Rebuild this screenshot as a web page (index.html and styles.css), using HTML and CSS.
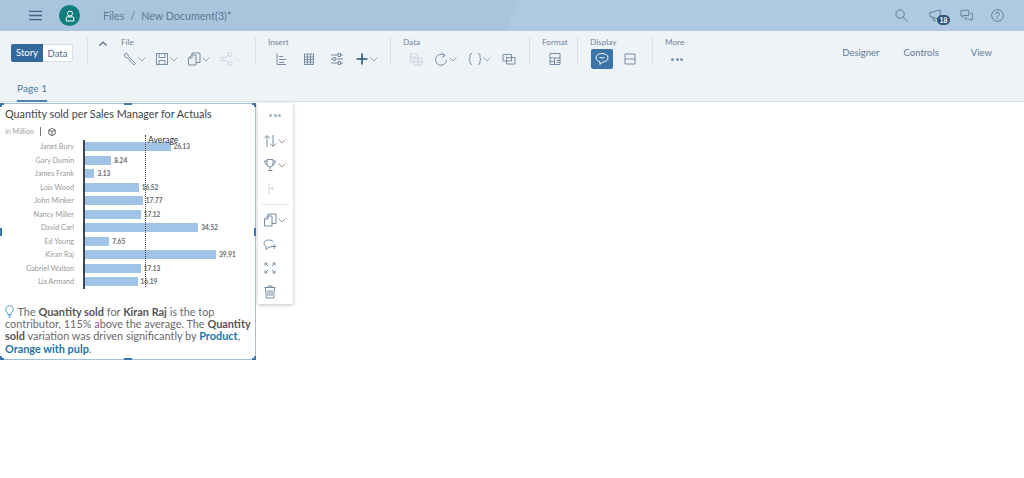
FILE: index.html
```html
<!DOCTYPE html>
<html lang="en">
<head>
  <meta charset="UTF-8" />
  <title>New Document(3)*</title>
  <link rel="stylesheet" href="styles.css">
</head>
<body>
  <header class="shell">
    <svg class="menu-icon" viewBox="0 0 14 12"><path d="M0 1.500h14M0 6h14M0 10.500h14"/></svg>
    <div class="avatar">
      <svg viewBox="0 0 12 14"><circle cx="6" cy="4" r="3"/><path d="M1.500 13V9.500q0-1.500 1.500-1.500h6q1.500 0 1.500 1.500V13z"/></svg>
    </div>
    <div class="crumbs">Files<span class="crumb-sep">/</span>New Document(3)*</div>
    <div class="shell-right">
      <svg class="shell-icon" viewBox="0 0 14 14"><circle cx="5.500" cy="5.500" r="4.500"/><path d="M9 9l4.500 4.500"/></svg>
      <div class="notice">
        <svg class="shell-icon" viewBox="0 0 14 14"><path d="M1 4l11-3v10L6 9.500 1 8zM4 9l1 3.500h2.500"/></svg>
        <span class="badge">18</span>
      </div>
      <svg class="shell-icon" viewBox="0 0 15 14"><path d="M1 1h9v6H4L2.500 9V7H1zM12 4.500h2.500v6.500H13v2l-2-2H6V8.500"/></svg>
      <svg class="shell-icon" viewBox="0 0 14 14"><circle cx="7" cy="7" r="6.300"/><path d="M5 5.500q0-2 2-2t2 2q0 1-1 1.500t-1 2M7 10v1"/></svg>
    </div>
  </header>

  <section class="toolbar">
    <div class="switch"><span class="switch-on">Story</span><span class="switch-off">Data</span></div>

    <div class="group group-file">
      <svg class="collapse" viewBox="0 0 8 5"><path d="M.5 4.500L4 1l3.500 3.500"/></svg>
      <div class="group-label">File</div>
      <div class="tools">
        <span class="tool"><svg class="icon" viewBox="0 0 14 14"><path d="M1 3l2-2 2 1.500 .5 2L12.500 11.500 11 13 4.500 6 2.500 5.500z"/></svg><svg class="chev" viewBox="0 0 8 5"><path d="M.5 .5L4 4l3.500-3.500"/></svg></span>
        <span class="tool"><svg class="icon" viewBox="0 0 14 14"><path d="M1.500 1.500h11v11h-11zM4 1.500v4h6v-4M4 12.500v-4h6v4"/></svg><svg class="chev" viewBox="0 0 8 5"><path d="M.5 .5L4 4l3.500-3.500"/></svg></span>
        <span class="tool"><svg class="icon" viewBox="0 0 14 14"><path d="M1.500 6L5 3h4v10H1.500zM5 3v3H1.500M5 3V1h8v9.500H9"/></svg><svg class="chev" viewBox="0 0 8 5"><path d="M.5 .5L4 4l3.500-3.500"/></svg></span>
        <span class="tool tool-off"><svg class="icon" viewBox="0 0 14 14"><circle cx="3" cy="7" r="2"/><circle cx="11" cy="2.500" r="2"/><circle cx="11" cy="11.500" r="2"/><path d="M5 6l4-2.500M5 8l4 2.500"/></svg><svg class="chev" viewBox="0 0 8 5"><path d="M.5 .5L4 4l3.500-3.500"/></svg></span>
      </div>
    </div>

    <div class="group group-insert">
      <div class="group-label">Insert</div>
      <div class="tools tools-insert">
        <span class="tool"><svg class="icon" viewBox="0 0 14 14"><path d="M3 1.500v11h9M5 4.500h4M5 7.500h7M5 10.500h5" /></svg></span>
        <span class="tool"><svg class="icon" viewBox="0 0 14 14"><path d="M2.500 2h9v10.500h-9zM2.500 5h9M2.500 7.500h9M2.500 10h9M5.500 2v10.500M8.500 2v10.500"/></svg></span>
        <span class="tool"><svg class="icon" viewBox="0 0 14 14"><path d="M1 3h12M1 7h12M1 11h12"/><path class="knob" d="M8 1.500h2.500v3H8zM3 5.500h2.500v3H3zM8 9.500h2.500v3H8z"/></svg></span>
        <span class="tool tool-plus"><svg class="icon icon-bold" viewBox="0 0 14 14"><path d="M7 1.500v11M1.500 7h11"/></svg><svg class="chev" viewBox="0 0 8 5"><path d="M.5 .5L4 4l3.500-3.500"/></svg></span>
      </div>
    </div>

    <div class="group group-data">
      <div class="group-label">Data</div>
      <div class="tools tools-data">
        <span class="tool tool-off"><svg class="icon" viewBox="0 0 14 14"><path d="M1.500 2h7v3M1.500 2v8h3M1.500 5h5M5 6h8v7H5zM5 9.500h8M9 6v7"/></svg></span>
        <span class="tool"><svg class="icon" viewBox="0 0 14 14"><path d="M10.500 3.500A5.500 5.500 0 1 0 12.500 8M8 .5l3 3-3 2"/></svg><svg class="chev" viewBox="0 0 8 5"><path d="M.5 .5L4 4l3.500-3.500"/></svg></span>
        <span class="tool"><svg class="icon" viewBox="0 0 14 14"><path d="M4 1.500Q2 1.500 2 3.500V5.500L.8 7 2 8.500v2q0 2 2 2M10 1.500q2 0 2 2v2L13.200 7 12 8.500v2q0 2-2 2"/></svg><svg class="chev" viewBox="0 0 8 5"><path d="M.5 .5L4 4l3.500-3.500"/></svg></span>
        <span class="tool"><svg class="icon" viewBox="0 0 14 14"><path d="M1 2.500h8.500v6.500H1zM4.500 5.500H13V12H4.500z"/></svg></span>
      </div>
    </div>

    <div class="group group-format">
      <div class="group-label">Format</div>
      <div class="tools tools-data">
        <span class="tool"><svg class="icon" viewBox="0 0 14 14"><path d="M2 1.500h10v11H2zM2 6h10M2 9.500h4.500M6.500 6v6.500M8.500 8.500H12M8.500 10.500H12"/></svg></span>
      </div>
    </div>

    <div class="group group-display">
      <div class="group-label">Display</div>
      <div class="tools tools-display">
        <span class="toggle-on"><svg class="icon" viewBox="0 0 14 14"><path d="M7 1.500c3.500 0 6 1.800 6 4.300s-2.500 4.200-5.500 4.200L5 12.500V9.800C2.500 9.200 1 7.800 1 5.800 1 3.300 3.500 1.500 7 1.500zM4.500 5.800h5"/></svg></span>
        <span class="tool"><svg class="icon" viewBox="0 0 14 14"><path d="M2 2h10v10H2zM2 7h10"/></svg></span>
      </div>
    </div>

    <div class="group group-more">
      <div class="group-label">More</div>
      <div class="tools tools-data"><span class="dots"><i></i><i></i><i></i></span></div>
    </div>

    <nav class="modes">
      <span class="mode">Designer</span>
      <span class="mode">Controls</span>
      <span class="mode">View</span>
    </nav>

    <div class="tabs"><span class="tab">Page 1</span></div>
  </section>

  <main class="canvas">
    <article class="widget">
      <i class="handle h-tl"></i><i class="handle h-tr"></i><i class="handle h-bl"></i><i class="handle h-br"></i>
      <i class="handle h-t"></i><i class="handle h-b"></i><i class="handle h-l"></i><i class="handle h-r"></i>

      <h2 class="chart-title">Quantity sold per Sales Manager for Actuals</h2>
      <div class="chart-sub">
        <span>in Million</span>
        <i class="sub-bar"></i>
        <svg class="cube" viewBox="0 0 10 10"><path d="M5 .5l4 2v5l-4 2-4-2v-5zM1 2.500l4 2 4-2M5 4.500v5"/></svg>
      </div>

      <div class="chart">
        <div class="avg-line"></div>
        <div class="avg-label">Average</div>
        <div class="row"><span class="name">Janet Bury</span><span class="bar" style="width:86.500px"></span><span class="value">26.13</span></div>
        <div class="row"><span class="name">Gary Dumin</span><span class="bar" style="width:27.300px"></span><span class="value">8.24</span></div>
        <div class="row"><span class="name">James Frank</span><span class="bar" style="width:10.400px"></span><span class="value">3.13</span></div>
        <div class="row"><span class="name">Lois Wood</span><span class="bar" style="width:54.700px"></span><span class="value">16.52</span></div>
        <div class="row"><span class="name">John Minker</span><span class="bar" style="width:58.800px"></span><span class="value">17.77</span></div>
        <div class="row"><span class="name">Nancy Miller</span><span class="bar" style="width:56.700px"></span><span class="value">17.12</span></div>
        <div class="row"><span class="name">David Carl</span><span class="bar" style="width:114.300px"></span><span class="value">34.52</span></div>
        <div class="row"><span class="name">Ed Young</span><span class="bar" style="width:25.300px"></span><span class="value">7.65</span></div>
        <div class="row"><span class="name">Kiran Raj</span><span class="bar" style="width:132.100px"></span><span class="value">39.91</span></div>
        <div class="row"><span class="name">Gabriel Walton</span><span class="bar" style="width:56.700px"></span><span class="value">17.13</span></div>
        <div class="row"><span class="name">Lia Armand</span><span class="bar" style="width:53.600px"></span><span class="value">16.19</span></div>
      </div>

      <p class="insight">
        <svg class="bulb" viewBox="0 0 9 13"><path d="M4.500 .7a3.800 3.800 0 0 1 2.200 6.900L6 9.500H3l-.7-1.900A3.800 3.800 0 0 1 4.500 .7zM3.200 11h2.600M3.800 12.500h1.400"/></svg>
        The <b>Quantity sold</b> for <b>Kiran Raj</b> is the top contributor, 115% above the average. The <b>Quantity sold</b> variation was driven significantly by <b class="link">Product</b>, <b class="link">Orange with pulp</b>.
      </p>
    </article>

    <aside class="float-bar">
      <span class="dots dots-light"><i></i><i></i><i></i></span>
      <span class="tool"><svg class="icon" viewBox="0 0 14 14"><path d="M4 13V2M1 4.500L4 1.500l3 3M10 1v11M7 9.500l3 3 3-3"/></svg><svg class="chev" viewBox="0 0 8 5"><path d="M.5 .5L4 4l3.500-3.500"/></svg></span>
      <span class="tool"><svg class="icon" viewBox="0 0 14 14"><path d="M4 1.500h6v4.500q0 3-3 3t-3-3zM4 3H1.500q0 3.500 3 4M10 3h2.500q0 3.500-3 4M7 9v2.500M4.500 12.500h5"/></svg><svg class="chev" viewBox="0 0 8 5"><path d="M.5 .5L4 4l3.500-3.500"/></svg></span>
      <span class="tool tool-off"><svg class="icon" viewBox="0 0 14 14"><path d="M6 1v12M6 2.500h1M6 6.500h4M6 10.500h1M9 5l1.500 1.500L9 8"/></svg></span>
      <i class="float-rule"></i>
      <span class="tool"><svg class="icon" viewBox="0 0 14 14"><path d="M1.500 6L5 3h4v10H1.500zM5 3v3H1.500M5 3V1h8v9.500H9"/></svg><svg class="chev" viewBox="0 0 8 5"><path d="M.5 .5L4 4l3.500-3.500"/></svg></span>
      <span class="tool"><svg class="icon" viewBox="0 0 14 14"><path d="M9 9.500Q8 10 7 10H6L3 12.500V9.500Q1 8.500 1 6.500 1 3 6 3q3.500 0 4.500 2M11 7v5M8.500 9.500h5"/></svg></span>
      <span class="tool"><svg class="icon" viewBox="0 0 14 14"><path d="M2 2l3 3M2 2v2.500M2 2h2.500M12 2L9 5M12 2v2.500M12 2H9.500M2 12l3-3M2 12V9.500M2 12h2.500M12 12L9 9M12 12V9.500M12 12H9.500"/></svg></span>
      <span class="tool"><svg class="icon" viewBox="0 0 14 14"><path d="M1.500 2.500h11M5 2.500V1h4v1.500M2.500 2.500l.8 10.500h7.400l.8-10.500M5 5v6M7 5v6M9 5v6"/></svg></span>
    </aside>
  </main>
</body>
</html>
```

FILE: styles.css
```css
* { box-sizing: border-box; }

body {
  margin: 0;
  background: #fff;
  font-family: Lato, "Noto Sans", sans-serif;
  color: #333;
  height: 478px;
  overflow: hidden;
}

svg { display: block; fill: none; stroke-width: 1; }

/* top shell */
.shell {
  height: 31px;
  display: flex;
  align-items: center;
  padding-left: 29px;
  background: linear-gradient(112deg, #a9c5de 0, #a9c5de 50%, #aec9e1 50%, #aec9e1 100%);
}
.menu-icon { width: 13px; height: 11px; stroke: #48627c; stroke-width: 1.500; }
.avatar {
  width: 21px;
  height: 21px;
  margin-left: 17px;
  border-radius: 50%;
  background: #107e7d;
  display: flex;
  align-items: center;
  justify-content: center;
}
.avatar svg { width: 10px; height: 12px; stroke: #fff; stroke-width: 1.200; }
.crumbs { margin-left: 23px; font-size: 10.700px; color: #62768b; }
.crumb-sep { margin: 0 6px; }
.shell-right {
  margin-left: auto;
  display: flex;
  align-items: center;
  gap: 18px;
  padding-right: 20px;
}
.shell-icon { width: 13px; height: 13px; stroke: #5d7690; }
.notice { position: relative; margin-left: 3px; }
.badge {
  position: absolute;
  left: 8px;
  top: 6px;
  width: 13px;
  height: 10px;
  border-radius: 5px;
  background: #2f5475;
  color: #fff;
  font-size: 7px;
  font-weight: 700;
  line-height: 10px;
  text-align: center;
}

/* toolbar */
.toolbar {
  position: relative;
  height: 71px;
  display: flex;
  padding: 6px 0 0 11px;
  background: #eef3f8;
  border-bottom: 1px solid #d3dfea;
}
.switch {
  display: flex;
  align-self: flex-start;
  margin-top: 7px;
  height: 18px;
  width: 62px;
  font-size: 9.500px;
  line-height: 17px;
  text-align: center;
}
.switch-on { width: 32px; background: #33699a; color: #fff; border-radius: 2px 0 0 2px; }
.switch-off { width: 30px; background: #fff; color: #4c6a88; border: 1px solid #d3dfea; border-left: 0; border-radius: 0 2px 2px 0; }
.group {
  position: relative;
  height: 27px;
  border-left: 1px solid #d9e2ea;
  padding-left: 12px;
}
.group-file { margin-left: 14px; width: 168px; padding-left: 33px; }
.group-insert { width: 135px; }
.group-data { width: 139px; }
.group-format { width: 48px; }
.group-display { width: 75px; }
.group-more { width: 60px; }
.collapse { position: absolute; left: 11px; top: 4px; width: 8px; height: 5px; stroke: #4d6984; stroke-width: 1.200; }
.group-label { font-size: 8.200px; line-height: 10px; color: #6f8499; }
.tools { display: flex; align-items: center; gap: 9px; margin-top: 4px; padding-left: 2px; height: 16px; }
.tools-insert { gap: 14px; padding-left: 6px; }
.tools-data { gap: 11px; padding-left: 6px; }
.tools-display { gap: 10px; padding-left: 1px; }
.tool { display: flex; align-items: center; gap: 1px; }
.tool-off { opacity: .3; }
.tool-plus { margin-left: -3px; }
.icon { width: 14px; height: 14px; stroke: #6b8299; stroke-width: .9; }
.icon-bold { stroke: #2f5475; stroke-width: 1.600; }
.knob { fill: #eef3f8; }
.chev { width: 8px; height: 5px; stroke: #94a6b8; }
.toggle-on {
  width: 22px;
  height: 20px;
  border-radius: 2px;
  background: #3b74a6;
  display: flex;
  align-items: center;
  justify-content: center;
}
.toggle-on .icon { stroke: #fff; stroke-width: 1; }
.dots { display: flex; gap: 1.500px; }
.dots i { width: 3px; height: 3px; border-radius: 50%; background: #7d95ab; }
.modes {
  position: absolute;
  top: 16px;
  right: 32px;
  display: flex;
  gap: 24px;
  font-size: 9.500px;
  color: #627b94;
}
.mode:last-child { margin-left: 8px; }
.tabs { position: absolute; left: 17px; bottom: -1px; }
.tab {
  display: block;
  height: 23px;
  padding-top: 3px;
  font-size: 10.200px;
  color: #4f7ca3;
  border-bottom: 2px solid #4d83b0;
}

/* canvas */
.canvas { display: flex; align-items: flex-start; gap: 2px; padding-top: 1px; }
.widget {
  position: relative;
  width: 256px;
  height: 257px;
  border: 1px solid #9fc0da;
  border-left-width: 0;
  padding-left: 5px;
}
.handle { position: absolute; background: #3d76a8; }
.h-t, .h-b { left: 124px; width: 8px; height: 2px; }
.h-t { top: -1px; } .h-b { bottom: -1px; }
.h-l, .h-r { top: 124px; width: 2px; height: 8px; }
.h-l { left: 0; } .h-r { right: -1px; }
.h-tl, .h-tr, .h-bl, .h-br { width: 4px; height: 4px; }
.h-tl { left: 0; top: -1px; clip-path: polygon(0 0, 100% 0, 100% 50%, 50% 50%, 50% 100%, 0 100%); }
.h-tr { right: -1px; top: -1px; clip-path: polygon(0 0, 100% 0, 100% 100%, 50% 100%, 50% 50%, 0 50%); }
.h-bl { left: 0; bottom: -1px; clip-path: polygon(0 0, 50% 0, 50% 50%, 100% 50%, 100% 100%, 0 100%); }
.h-br { right: -1px; bottom: -1px; clip-path: polygon(50% 0, 100% 0, 100% 100%, 0 100%, 0 50%, 50% 50%); }
.chart-title { margin: 2px 0 0; font-size: 10.800px; line-height: 15px; font-weight: 400; color: #444; white-space: nowrap; }
.chart-sub { display: flex; align-items: center; gap: 6px; margin-top: 5px; height: 11px; font-size: 7.200px; color: #a3a3a3; }
.sub-bar { width: 1px; height: 9px; background: #777; }
.cube { width: 8px; height: 8px; stroke: #444; margin-left: 1px; }
.chart { position: relative; margin-top: 3px; margin-left: -5px; width: 256px; }
.row { display: flex; align-items: center; height: 13.500px; }
.name {
  width: 74px;
  margin-right: 10px;
  text-align: right;
  font-size: 7.300px;
  color: #999;
  white-space: nowrap;
}
.bar { height: 9px; background: #a0c3e6; }
.value { margin-left: 3px; font-size: 6.500px; font-weight: 700; color: #666; }
.chart::before {
  content: "";
  position: absolute;
  left: 83px;
  top: 0;
  bottom: 0;
  width: 2px;
  background: #3a4650;
}
.avg-line { position: absolute; left: 145px; top: -5px; bottom: 2px; border-left: 1px dotted #444; }
.avg-label { position: absolute; left: 148px; top: -5px; font-size: 8.500px; color: #333; z-index: 1; }
.insight {
  margin: 16px 0 0;
  font-size: 10.900px;
  line-height: 12.400px;
  color: #6a6a6a;
  width: 246px;
}
.insight b { color: #555; font-weight: 700; }
.insight .link { color: #1d74a8; }
.bulb { display: inline-block; width: 9px; height: 13px; stroke: #4c9ed0; vertical-align: -2px; margin-right: 1px; }

/* floating action bar */
.float-bar {
  width: 35px;
  height: 201px;
  background: #fff;
  box-shadow: 0 1px 4px rgba(0, 0, 0, .25);
  display: flex;
  flex-direction: column;
  align-items: flex-start;
  padding: 11px 0 0 5px;
}
.float-bar .tool { height: 14px; margin-top: 10px; }
.float-bar .dots { margin: 0 0 1px 6px; }
.float-bar .dots i { background: #9fb1c2; }
.float-bar .dots + .tool { margin-top: 16px; }
.float-rule { width: 28px; height: 1px; margin: 8px 0 0 -2px; background: #e1e6eb; }
.float-rule + .tool { margin-top: 8px; }
```
